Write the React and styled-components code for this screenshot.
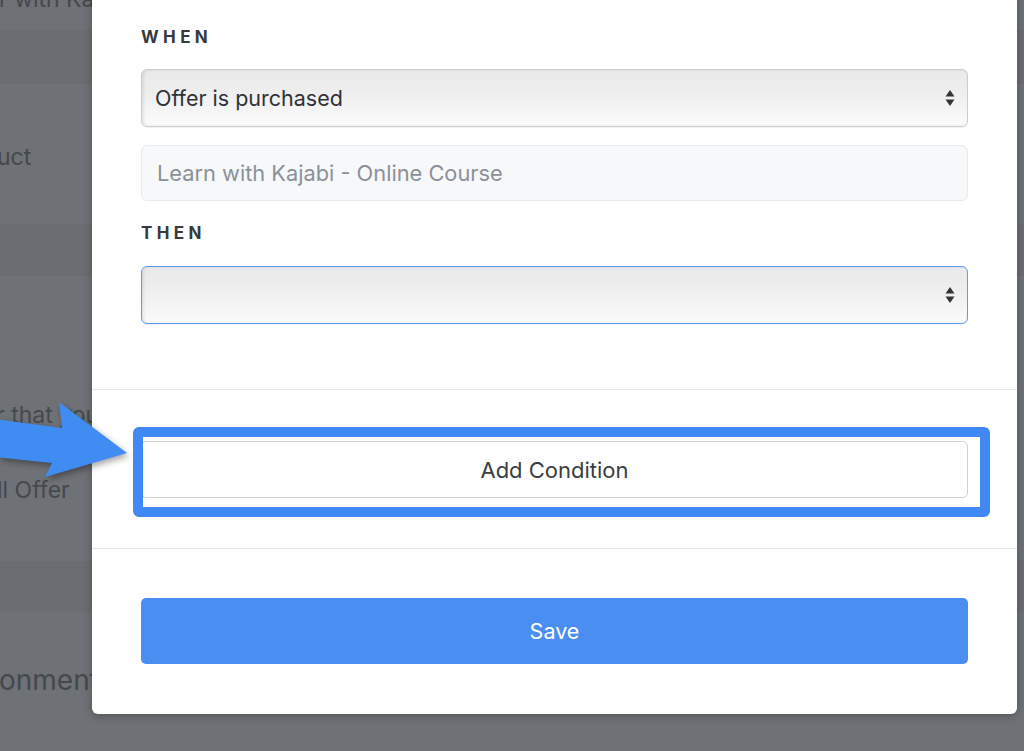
import React from 'react'
import styled, { createGlobalStyle } from 'styled-components'

const Global = createGlobalStyle`
  html, body {
    margin: 0;
    padding: 0;
    background: #6e7175;
    overflow: hidden;
  }
  body {
    font-family: Inter, "Liberation Sans", Arial, sans-serif;
  }
`

const Page = styled.div`
  position: relative;
  width: 1024px;
  height: 751px;
  overflow: hidden;
  background: #6e7175;
`

const Backdrop = styled.div`
  display: flex;
  flex-direction: column;
  width: 100%;
`

const Row = styled.div`
  height: ${p => p.h}px;
  background: ${p => (p.band ? '#6a6d71' : 'transparent')};
  border-bottom: 1px solid #696c70;
  display: flex;
  flex-direction: column;
`

const Fragment = styled.div`
  font-size: ${p => p.size || 23}px;
  color: #45484c;
  white-space: nowrap;
  margin-top: ${p => p.top}px;
  margin-left: ${p => p.shift || 0}px;
  line-height: 28px;
`

const Modal = styled.div`
  position: absolute;
  left: 92px;
  top: -10px;
  width: 925px;
  background: #fff;
  border-radius: 6px;
  box-shadow: 0 2px 10px rgba(0, 0, 0, 0.25);
`

const Section = styled.div`
  padding: ${p => p.pad};
  border-bottom: ${p => (p.last ? 'none' : '1px solid #e7e8ea')};
  display: flex;
  flex-direction: column;
`

const Label = styled.div`
  font-size: 17px;
  font-weight: 700;
  letter-spacing: 4.4px;
  color: #36393d;
  line-height: 20px;
  margin-top: ${p => p.mt || 0}px;
`

const SelectBox = styled.div`
  height: 56px;
  margin-top: ${p => p.mt}px;
  border: 1px solid ${p => (p.focus ? '#5b9bf2' : '#c9cdd3')};
  border-radius: 6px;
  background: linear-gradient(to bottom, #e9e9e9 0%, #eeeeee 40%, #fbfbfb 100%);
  box-shadow: inset 2px 0 3px rgba(0, 0, 0, 0.08), 0 1px 1px rgba(0, 0, 0, 0.05);
  display: flex;
  align-items: center;
  justify-content: space-between;
  padding: 0 12px 0 13px;
  font-size: 21.5px;
  color: #2f3236;
`

const Input = styled.div`
  height: 54px;
  margin-top: 18px;
  border: 1px solid #e8eaee;
  border-radius: 6px;
  background: #f7f8fa;
  display: flex;
  align-items: center;
  padding: 0 15px;
  font-size: 21.8px;
  color: #8b9199;
`

const ButtonWrap = styled.div`
  position: relative;
`

const OutlineButton = styled.div`
  height: 55px;
  border: 1px solid #cfd1d6;
  border-radius: 5px;
  background: #fff;
  display: flex;
  align-items: center;
  justify-content: center;
  font-size: 22px;
  color: #3a3d41;
`

const Highlight = styled.div`
  position: absolute;
  left: -8px;
  right: -22px;
  top: -14px;
  bottom: -19px;
  border: 10px solid #4189f2;
  border-radius: 6px;
  pointer-events: none;
`

const PrimaryButton = styled.div`
  height: 66px;
  border-radius: 5px;
  background: #4a8ef1;
  display: flex;
  align-items: center;
  justify-content: center;
  font-size: 21.5px;
  color: #fff;
`

const Arrow = styled.svg`
  position: absolute;
  left: 0;
  top: 395px;
  filter: drop-shadow(2px 3px 3px rgba(0, 0, 0, 0.35));
`

const Updown = () => (
  <svg width="10" height="18" viewBox="0 0 10 18">
    <path d="M5 1 L9.5 7.5 H0.5 Z" fill="#333" />
    <path d="M5 17 L9.5 10.5 H0.5 Z" fill="#333" />
  </svg>
)

export default function App() {
  return (
    <Page>
      <Global />
      <Backdrop>
        <Row h={30}>
          <Fragment top={-15} shift={-1}>r with Kajabi</Fragment>
        </Row>
        <Row h={52} band />
        <Row h={140}>
          <Fragment top={59} shift={-3}>uct</Fragment>
        </Row>
        <Row h={50} band />
        <Row h={285}>
          <Fragment top={125} shift={-4}>r that you</Fragment>
          <Fragment top={47} shift={-3}>ll Offer</Fragment>
        </Row>
        <Row h={48} band />
        <Row h={146}>
          <Fragment top={55} shift={-1} size={28}>onments</Fragment>
        </Row>
      </Backdrop>

      <Modal>
        <Section pad="27px 49px 65px">
          <Label mt={10}>WHEN</Label>
          <SelectBox mt={22}>
            <span>Offer is purchased</span>
            <Updown />
          </SelectBox>
          <Input>Learn with Kajabi - Online Course</Input>
          <Label mt={22}>THEN</Label>
          <SelectBox mt={23} focus>
            <span />
            <Updown />
          </SelectBox>
        </Section>
        <Section pad="51px 49px 50px">
          <ButtonWrap>
            <OutlineButton>Add Condition</OutlineButton>
            <Highlight />
          </ButtonWrap>
        </Section>
        <Section pad="49px 49px 50px" last>
          <PrimaryButton>Save</PrimaryButton>
        </Section>
      </Modal>

      <Arrow width="140" height="90" viewBox="0 0 140 90">
        <polygon
          points="-5,24 62,33 59,7 127,58 45,82 52,68 -5,62"
          fill="#3f8cf2"
        />
      </Arrow>
    </Page>
  )
}
